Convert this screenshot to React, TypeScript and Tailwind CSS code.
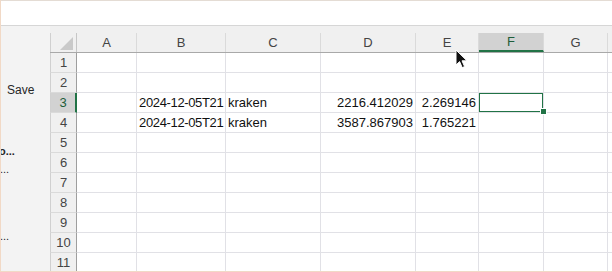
import React from "react";

const cols = [
  { name: "A", w: "w-[60px]" },
  { name: "B", w: "w-[89px]" },
  { name: "C", w: "w-[95px]" },
  { name: "D", w: "w-[95px]" },
  { name: "E", w: "w-[63px]" },
  { name: "F", w: "w-[65px]" },
  { name: "G", w: "w-[64px]" },
  { name: "", w: "flex-1" },
];

type Cell = { text: string; align?: "left" | "right"; tight?: boolean };

const data: Record<number, Record<string, Cell>> = {
  3: {
    B: { text: "2024-12-05T21", tight: true },
    C: { text: "kraken" },
    D: { text: "2216.412029", align: "right" },
    E: { text: "2.269146", align: "right" },
  },
  4: {
    B: { text: "2024-12-05T21", tight: true },
    C: { text: "kraken" },
    D: { text: "3587.867903", align: "right" },
    E: { text: "1.765221", align: "right" },
  },
};

const rows = [1, 2, 3, 4, 5, 6, 7, 8, 9, 10, 11];

const Cursor = () => (
  <svg
    className="absolute left-[454px] top-[49px]"
    width="14"
    height="21"
    viewBox="0 0 14 21"
  >
    <path
      d="M1 1 L1 16 L4.6 12.6 L7.2 18.6 L9.6 17.6 L7 11.8 L12 11.8 Z"
      fill="#111"
      stroke="#fff"
      strokeWidth="1"
      strokeLinejoin="round"
    />
  </svg>
);

export default function App() {
  return (
    <div
      className="relative w-[612px] h-[272px] overflow-hidden bg-white border-l border-b border-[#f1d9c6] flex flex-col"
      style={{ fontFamily: '"Liberation Sans", Arial, sans-serif' }}
    >
      {/* top band */}
      <div className="h-[26px] shrink-0 bg-white border-t border-[#e4dcd4] border-b border-b-[#d6d6d6]" />

      <div className="flex flex-1 bg-[#f0f0f0]">
        {/* backstage edge */}
        <div className="w-[49px] shrink-0 bg-[#f3f3f3] relative text-[12px] text-[#262626]">
          <div className="absolute left-[6px] top-[55px]">Save</div>
          <div className="absolute -left-[2px] top-[117px] font-bold text-[11px]">o...</div>
          <div className="absolute -left-[1px] top-[135px] text-[11px]">...</div>
          <div className="absolute -left-[1px] top-[202px] text-[11px]">...</div>
        </div>

        {/* sheet */}
        <div className="flex-1 flex flex-col pt-[7px]">
          {/* column header */}
          <div className="flex h-[20px] shrink-0 border-b border-[#a9a9a9] bg-[#f0f0f0]">
            <div className="w-[27px] shrink-0 border-l border-[#d0d0d0] border-r border-r-[#c6c6c6] relative">
              <svg className="absolute right-[3px] bottom-[2px]" width="13" height="13">
                <path d="M13 0 L13 13 L0 13 Z" fill="#c9c9c9" />
              </svg>
            </div>
            {cols.map((c) => (
              <div
                key={c.name || "x"}
                className={`${c.w} shrink-0 flex items-center justify-center text-[13px] border-r border-[#dadada] ${
                  c.name === "F"
                    ? "bg-[#d2d2d2] text-[#1e5e3a] border-b-2 border-b-[#217346]"
                    : "text-[#444]"
                }`}
              >
                {c.name}
              </div>
            ))}
          </div>

          {rows.map((r) => (
            <div key={r} className="flex h-[20px] shrink-0">
              <div
                className={`w-[27px] shrink-0 border-l border-[#d0d0d0] flex items-center justify-center text-[13px] border-b border-b-[#dadada] ${
                  r === 3
                    ? "bg-[#d2d2d2] text-[#1e5e3a] border-r-2 border-r-[#217346]"
                    : "bg-[#f0f0f0] text-[#444] border-r border-r-[#9e9e9e]"
                }`}
              >
                {r}
              </div>
              {cols.map((c) => {
                const cell = data[r]?.[c.name];
                const selected = r === 3 && c.name === "F";
                return (
                  <div
                    key={c.name || "x"}
                    className={`${c.w} shrink-0 relative bg-white border-r border-b border-[#e1e1e6] text-[13px] text-[#111] flex items-center overflow-hidden whitespace-nowrap px-[2px] ${
                      cell?.align === "right" ? "justify-end" : "justify-start"
                    } ${cell?.tight ? "tracking-[-0.35px]" : ""}`}
                  >
                    {cell?.text}
                    {selected && (
                      <div className="absolute -left-[1px] -top-[1px] w-[66px] h-[21px] border-2 border-[#217346]" />
                    )}
                  </div>
                );
              })}
            </div>
          ))}
        </div>
      </div>

      {/* fill handle */}
      <div className="absolute left-[539px] top-[108px] w-[7px] h-[7px] bg-[#217346] border border-white" />
      <Cursor />
    </div>
  );
}
